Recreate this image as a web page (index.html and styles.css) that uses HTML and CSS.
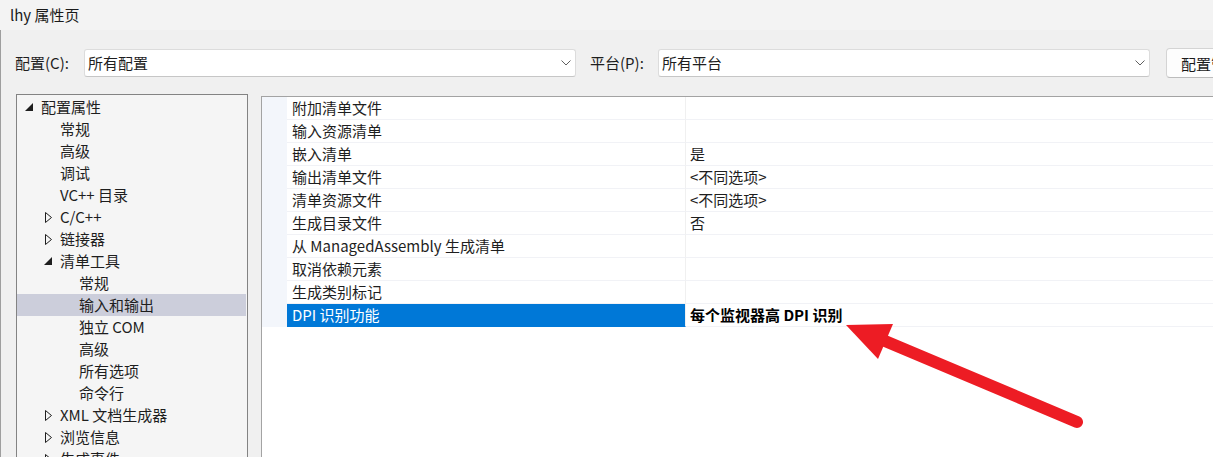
FILE: index.html
```html
<!DOCTYPE html>
<html lang="zh-CN">
<head>
<meta charset="utf-8">
<title>lhy 属性页</title>
<link rel="stylesheet" href="styles.css">
</head>
<body>
<div class="window">
  <div class="titlebar">lhy 属性页</div>
  <div class="content">
    <div class="toolbar">
      <label class="lbl lbl-config">配置(C):</label>
      <div class="combo"><span>所有配置</span><svg class="chev" width="10" height="6" viewBox="0 0 10 6"><polyline points="0.5,0.5 5,5 9.5,0.5" fill="none" stroke="#606060" stroke-width="1"/></svg></div>
      <label class="lbl lbl-platform">平台(P):</label>
      <div class="combo"><span>所有平台</span><svg class="chev" width="10" height="6" viewBox="0 0 10 6"><polyline points="0.5,0.5 5,5 9.5,0.5" fill="none" stroke="#606060" stroke-width="1"/></svg></div>
      <button class="btn">配置管理器(O)...</button>
    </div>
    <div class="main">
      <div class="tree">
        <div class="node l0"><span class="exp"><svg width="9" height="9" viewBox="0 0 9 9"><polygon points="0,8 8,8 8,0" fill="#1e1e1e"/></svg></span><span>配置属性</span></div>
        <div class="node l1"><span class="exp"></span><span>常规</span></div>
        <div class="node l1"><span class="exp"></span><span>高级</span></div>
        <div class="node l1"><span class="exp"></span><span>调试</span></div>
        <div class="node l1"><span class="exp"></span><span>VC++ 目录</span></div>
        <div class="node l1"><span class="exp c"><svg width="8" height="11" viewBox="0 0 8 11"><polygon points="0.5,0.5 6.5,5.5 0.5,10.5" fill="none" stroke="#1e1e1e" stroke-width="1"/></svg></span><span>C/C++</span></div>
        <div class="node l1"><span class="exp c"><svg width="8" height="11" viewBox="0 0 8 11"><polygon points="0.5,0.5 6.5,5.5 0.5,10.5" fill="none" stroke="#1e1e1e" stroke-width="1"/></svg></span><span>链接器</span></div>
        <div class="node l1"><span class="exp"><svg width="9" height="9" viewBox="0 0 9 9"><polygon points="0,8 8,8 8,0" fill="#1e1e1e"/></svg></span><span>清单工具</span></div>
        <div class="node l2"><span class="exp"></span><span>常规</span></div>
        <div class="node l2 selected"><span class="exp"></span><span>输入和输出</span></div>
        <div class="node l2"><span class="exp"></span><span>独立 COM</span></div>
        <div class="node l2"><span class="exp"></span><span>高级</span></div>
        <div class="node l2"><span class="exp"></span><span>所有选项</span></div>
        <div class="node l2"><span class="exp"></span><span>命令行</span></div>
        <div class="node l1"><span class="exp c"><svg width="8" height="11" viewBox="0 0 8 11"><polygon points="0.5,0.5 6.5,5.5 0.5,10.5" fill="none" stroke="#1e1e1e" stroke-width="1"/></svg></span><span>XML 文档生成器</span></div>
        <div class="node l1"><span class="exp c"><svg width="8" height="11" viewBox="0 0 8 11"><polygon points="0.5,0.5 6.5,5.5 0.5,10.5" fill="none" stroke="#1e1e1e" stroke-width="1"/></svg></span><span>浏览信息</span></div>
        <div class="node l1"><span class="exp c"><svg width="8" height="11" viewBox="0 0 8 11"><polygon points="0.5,0.5 6.5,5.5 0.5,10.5" fill="none" stroke="#1e1e1e" stroke-width="1"/></svg></span><span>生成事件</span></div>
      </div>
      <div class="grid">
        <div class="row"><div class="margin"></div><div class="name">附加清单文件</div><div class="value"></div></div>
        <div class="row"><div class="margin"></div><div class="name">输入资源清单</div><div class="value"></div></div>
        <div class="row"><div class="margin"></div><div class="name">嵌入清单</div><div class="value">是</div></div>
        <div class="row"><div class="margin"></div><div class="name">输出清单文件</div><div class="value">&lt;不同选项&gt;</div></div>
        <div class="row"><div class="margin"></div><div class="name">清单资源文件</div><div class="value">&lt;不同选项&gt;</div></div>
        <div class="row"><div class="margin"></div><div class="name">生成目录文件</div><div class="value">否</div></div>
        <div class="row"><div class="margin"></div><div class="name">从 ManagedAssembly 生成清单</div><div class="value"></div></div>
        <div class="row"><div class="margin"></div><div class="name">取消依赖元素</div><div class="value"></div></div>
        <div class="row"><div class="margin"></div><div class="name">生成类别标记</div><div class="value"></div></div>
        <div class="row active"><div class="margin"></div><div class="name">DPI 识别功能</div><div class="value">每个监视器高 DPI 识别</div></div>
      </div>
    </div>
  </div>
  <svg class="arrow" width="1213" height="457" viewBox="0 0 1213 457">
    <line x1="1077" y1="422" x2="885" y2="341" stroke="#ed1c24" stroke-width="12" stroke-linecap="round"/>
    <polygon points="846,325 893,324 878,359" fill="#ed1c24"/>
  </svg>
</div>
</body>
</html>
```
FILE: styles.css
```css
html, body {
  margin: 0;
  padding: 0;
}
body {
  width: 1213px;
  height: 457px;
  overflow: hidden;
  background: #f0f0f0;
  font-family: "Noto Sans CJK SC", "Microsoft YaHei", sans-serif;
  font-size: 15px;
  color: #1e1e1e;
}
.window {
  position: relative;
  width: 1213px;
  height: 457px;
  overflow: hidden;
}
.titlebar {
  height: 30px;
  line-height: 30px;
  padding-left: 10px;
  color: #1a1a1a;
  background: #f3f3f3;
}
.content {
  border-left: 1px solid #9e9e9e;
  height: 427px;
  overflow: hidden;
}
.toolbar {
  display: flex;
  align-items: center;
  height: 30px;
  margin-top: 18px;
  padding-left: 14px;
  white-space: nowrap;
}
.lbl {
  flex: none;
  line-height: 20px;
  color: #1e1e1e;
}
.lbl-config { width: 69px; }
.lbl-platform { width: 68px; margin-left: 14px; }
.combo {
  flex: none;
  box-sizing: border-box;
  width: 492px;
  height: 28px;
  background: #ffffff;
  border: 1px solid #dcdcdc;
  border-bottom-color: #c6c6c6;
  border-radius: 3px;
  display: flex;
  align-items: center;
  justify-content: space-between;
  padding: 0 4px 0 3px;
  line-height: 20px;
}
.btn {
  box-sizing: border-box;
  flex: none;
  margin-left: 16px;
  width: 130px;
  height: 30px;
  padding: 0 0 0 14px;
  text-align: left;
  background: #fdfdfd;
  border: 1px solid #d4d4d4;
  border-bottom-color: #bcbcbc;
  border-radius: 4px;
  font-family: inherit;
  font-size: 15px;
  color: #1a1a1a;
  white-space: nowrap;
}
.main {
  display: flex;
  align-items: flex-start;
  margin-top: 16px;
  padding-left: 15px;
}
.tree {
  box-sizing: border-box;
  flex: none;
  width: 232px;
  height: 400px;
  background: #f5f5f5;
  border: 1px solid #838383;
  padding-top: 1px;
}
.node {
  display: flex;
  align-items: center;
  height: 22px;
  line-height: 22px;
  white-space: nowrap;
  margin-right: 1px;
}
.node.l0 { padding-left: 8px; }
.node.l1 { padding-left: 27px; }
.node.l2 { padding-left: 46px; }
.node.selected { background: #cccedb; }
.exp {
  width: 16px;
  flex: none;
  display: flex;
  align-items: center;
}
.exp.c { padding-left: 1px; box-sizing: border-box; }
.grid {
  box-sizing: border-box;
  flex: none;
  margin-left: 13px;
  margin-top: 2px;
  width: 960px;
  height: 400px;
  background: #ffffff;
  border-top: 1px solid #a3a3a3;
  border-left: 1px solid #a3a3a3;
}
.row {
  display: flex;
  height: 23px;
}
.margin {
  width: 25px;
  flex: none;
  background: #f3f6fb;
}
.name {
  box-sizing: border-box;
  width: 399px;
  flex: none;
  height: 23px;
  line-height: 22px;
  padding-left: 5px;
  border-bottom: 1px solid #f1f2f6;
  border-right: 1px solid #f0f0f0;
  white-space: nowrap;
  color: #1e1e1e;
}
.value {
  box-sizing: border-box;
  flex: 1;
  height: 23px;
  line-height: 22px;
  padding-left: 4px;
  border-bottom: 1px solid #f1f2f6;
  white-space: nowrap;
  color: #1e1e1e;
}
.row.active .name {
  background: #0078d7;
  color: #ffffff;
  border-bottom-color: #0078d7;
}
.row.active .value {
  font-weight: bold;
  color: #000000;
}
.arrow {
  position: absolute;
  left: 0;
  top: 0;
  pointer-events: none;
}
```
